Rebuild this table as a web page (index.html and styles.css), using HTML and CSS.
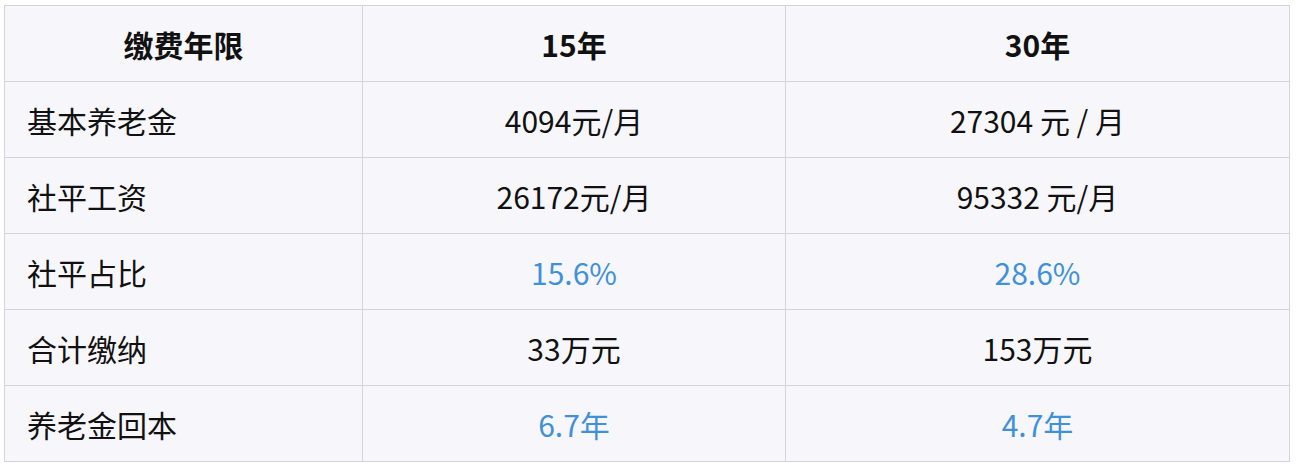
FILE: index.html
```html
<!DOCTYPE html>
<html lang="zh-CN">
<head>
<meta charset="utf-8">
<title>缴费年限对比</title>
<link rel="stylesheet" href="styles.css">
</head>
<body>
<div class="wrap">
<table class="cmp">
  <colgroup>
    <col class="c1"><col class="c2"><col class="c3">
  </colgroup>
  <thead>
    <tr><th>缴费年限</th><th>15年</th><th>30年</th></tr>
  </thead>
  <tbody>
    <tr><td class="label">基本养老金</td><td>4094元/月</td><td>27304 元 / 月</td></tr>
    <tr><td class="label">社平工资</td><td>26172元/月</td><td>95332 元/月</td></tr>
    <tr><td class="label">社平占比</td><td class="hl">15.6%</td><td class="hl">28.6%</td></tr>
    <tr><td class="label">合计缴纳</td><td>33万元</td><td>153万元</td></tr>
    <tr><td class="label">养老金回本</td><td class="hl">6.7年</td><td class="hl">4.7年</td></tr>
  </tbody>
</table>
</div>
</body>
</html>
```
FILE: styles.css
```css
html, body {
  margin: 0;
  padding: 0;
  background: #ffffff;
}
.wrap {
  padding: 5px 0 0 4px;
}
.cmp {
  border-collapse: collapse;
  table-layout: fixed;
  width: 1285px;
  background: #f7f7fb;
  font-family: "Noto Sans CJK SC", "Noto Sans", sans-serif;
  font-size: 30px;
  color: #111111;
}
.c1 { width: 358px; }
.c2 { width: 423px; }
.c3 { width: 504px; }
.cmp th, .cmp td {
  border: 1px solid #d3d3db;
  height: 75px;
  padding: 0;
  text-align: center;
  vertical-align: middle;
  line-height: 1;
}
.cmp th {
  font-weight: 700;
}
.cmp td {
  font-weight: 400;
}
.cmp td.label {
  text-align: left;
  padding-left: 22px;
}
.cmp td.hl {
  color: #3f91da;
}
```
